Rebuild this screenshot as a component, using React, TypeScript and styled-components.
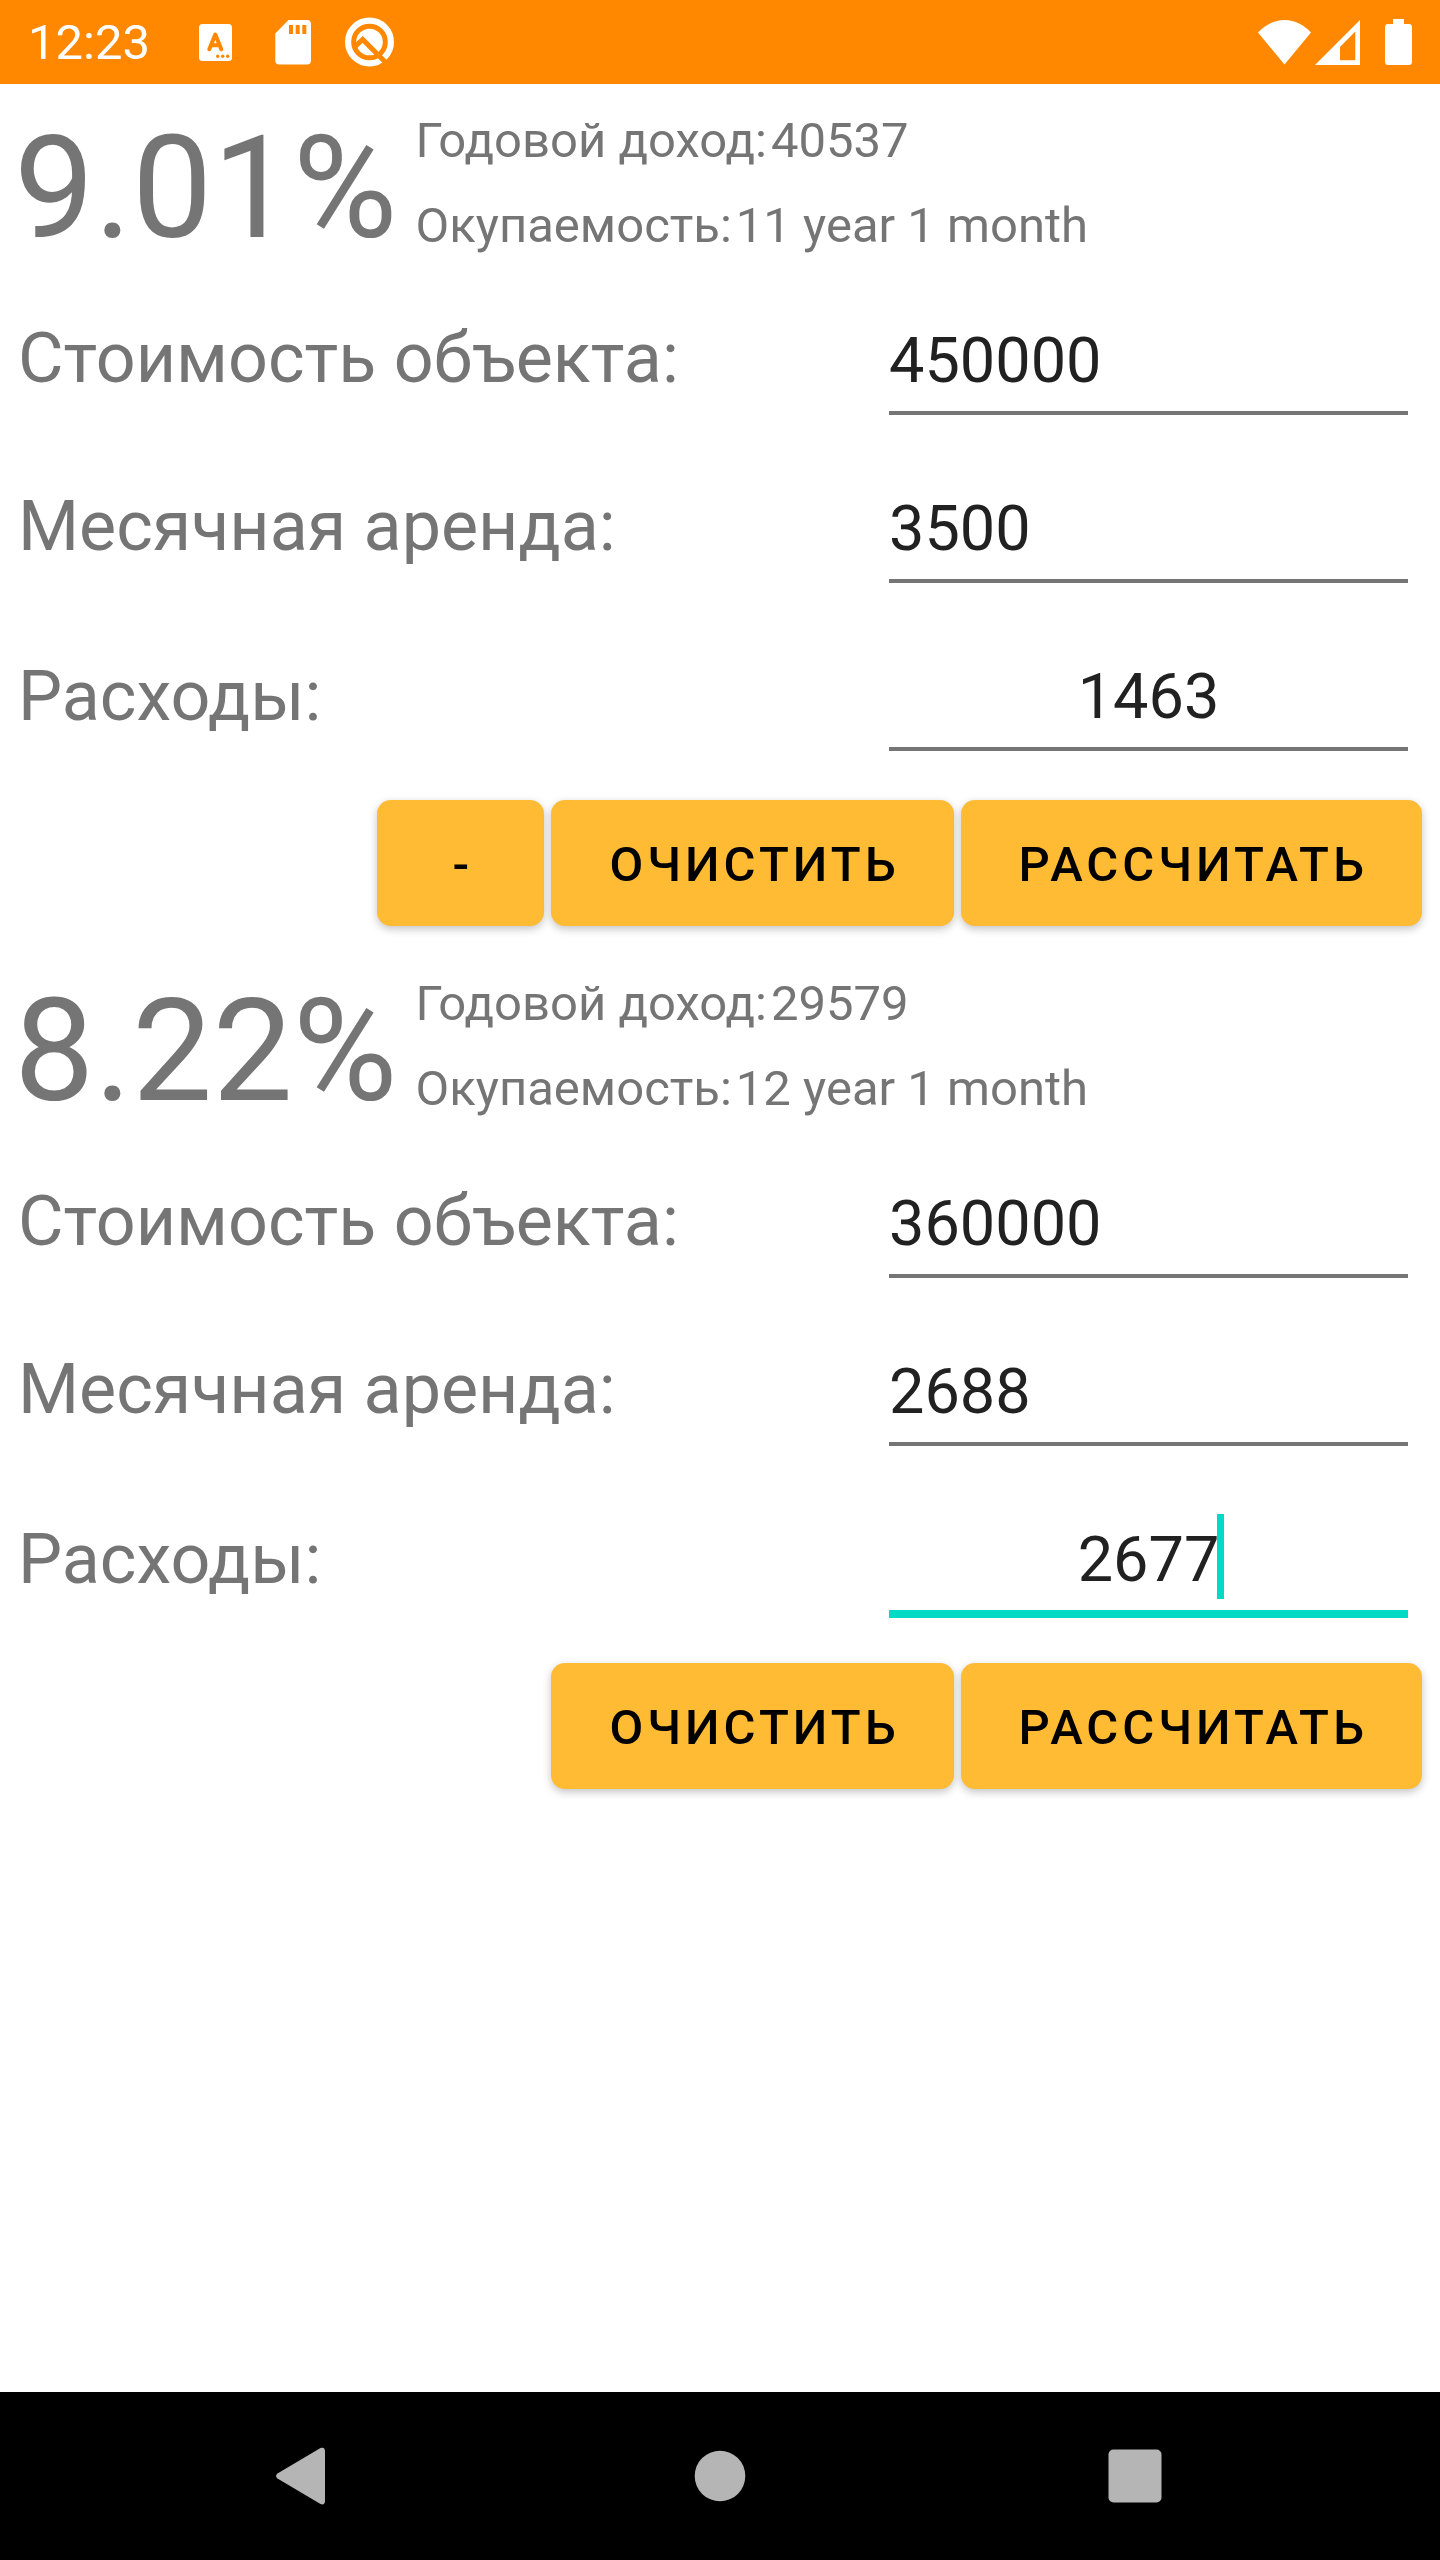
import React, { useId, useState } from "react";
import styled, { createGlobalStyle } from "styled-components";

const GlobalStyle = createGlobalStyle`
  * { box-sizing: border-box; }
  html, body, #root { margin: 0; min-height: 100%; }
  body {
    background: #ffffff;
    font-family: Roboto, "Noto Sans", sans-serif;
    color: #757575;
  }
`;

const Screen = styled.div`
  min-height: 100vh;
  display: flex;
  flex-direction: column;
`;

const StatusBar = styled.header`
  height: 84px;
  padding: 0 28px;
  display: flex;
  align-items: center;
  justify-content: space-between;
  background: #ff8800;
  color: #ffffff;
`;

const StatusGroup = styled.div<{ $gap: number }>`
  display: flex;
  align-items: center;
  gap: ${(p) => p.$gap}px;
`;

const Clock = styled.time`
  padding-top: 2px;
  font-size: 49px;
  line-height: 56px;
`;

const Icon = styled.svg`
  display: block;
  flex: none;
`;

const Content = styled.main`
  flex: 1;
`;

const Card = styled.form`
  margin: 0;
  padding: 14px 0 21px;
`;

const Summary = styled.div`
  display: flex;
  align-items: flex-start;
  gap: 18px;
  height: 178px;
  padding: 0 14px;
`;

const Percent = styled.output`
  font-size: 143px;
  line-height: 180px;
`;

const Facts = styled.dl`
  margin: 0;
`;

const Fact = styled.div`
  display: flex;
  gap: 4px;
  font-size: 49px;
  line-height: 85px;
  white-space: nowrap;

  dt, dd { margin: 0; }
`;

const Row = styled.div<{ $align: "baseline" | "center" }>`
  display: grid;
  grid-template-columns: 857fr 547fr;
  align-items: ${(p) => p.$align};
  padding: 29px 18px;
`;

const Label = styled.label`
  font-size: 70px;
  line-height: 84px;
`;

const Field = styled.div<{ $active: boolean }>`
  position: relative;
  margin: 0 14px;
  font-size: 63px;

  &::after {
    content: "";
    position: absolute;
    left: 0;
    right: 0;
    bottom: ${(p) => (p.$active ? -4 : 0)}px;
    height: ${(p) => (p.$active ? 8 : 4)}px;
    background: ${(p) => (p.$active ? "#03dac5" : "#757575")};
  }
`;

const Input = styled.input<{ $centered: boolean }>`
  display: block;
  width: 100%;
  height: 110px;
  padding: 0;
  border: 0;
  outline: 0;
  background: transparent;
  color: #212121;
  caret-color: transparent;
  font: inherit;
  text-align: ${(p) => (p.$centered ? "center" : "left")};
`;

const Caret = styled.span<{ $chars: number }>`
  position: absolute;
  top: 10px;
  left: calc(50% + ${(p) => p.$chars / 2}ch - 2px);
  width: 7px;
  height: 85px;
  background: #03dac5;
`;

const Actions = styled.div`
  display: flex;
  justify-content: flex-end;
  gap: 7px;
  padding: 20px 18px 0;
`;

const Button = styled.button`
  min-width: 167px;
  height: 126px;
  padding: 4px 54px 0 58px;
  border: 0;
  border-radius: 14px;
  background: #ffbb33;
  color: #000000;
  font: 500 49px/56px Roboto, "Noto Sans", sans-serif;
  letter-spacing: 4px;
  text-transform: uppercase;
  box-shadow: 0 3px 8px rgba(0, 0, 0, 0.24);
`;

const NavBar = styled.nav`
  height: 168px;
  padding: 0 92px;
  display: flex;
  background: #000000;
`;

const NavButton = styled.button`
  flex: 1;
  display: grid;
  place-items: center;
  padding: 0;
  border: 0;
  background: transparent;
  color: #b5b5b5;
`;

type FieldProps = { label: string; initial: string; centered?: boolean; active?: boolean };

function FieldRow({ label, initial, centered = false, active = false }: FieldProps) {
  const id = useId();
  const [value, setValue] = useState(initial);
  return (
    <Row $align={centered ? "center" : "baseline"}>
      <Label htmlFor={id}>{label}</Label>
      <Field $active={active}>
        <Input
          id={id}
          inputMode="numeric"
          value={value}
          $centered={centered}
          onChange={(e) => setValue(e.target.value)}
        />
        {active && <Caret $chars={value.length} />}
      </Field>
    </Row>
  );
}

type Estimate = {
  percent: string;
  income: string;
  payback: string;
  price: string;
  rent: string;
  costs: string;
  removable?: boolean;
  editing?: boolean;
};

const estimates: Estimate[] = [
  { percent: "9.01%", income: "40537", payback: "11 year 1 month", price: "450000", rent: "3500", costs: "1463", removable: true },
  { percent: "8.22%", income: "29579", payback: "12 year 1 month", price: "360000", rent: "2688", costs: "2677", editing: true },
];

function EstimateCard({ data }: { data: Estimate }) {
  return (
    <Card onSubmit={(e) => e.preventDefault()}>
      <Summary>
        <Percent>{data.percent}</Percent>
        <Facts>
          <Fact><dt>Годовой доход:</dt><dd>{data.income}</dd></Fact>
          <Fact><dt>Окупаемость:</dt><dd>{data.payback}</dd></Fact>
        </Facts>
      </Summary>
      <FieldRow label="Стоимость объекта:" initial={data.price} />
      <FieldRow label="Месячная аренда:" initial={data.rent} />
      <FieldRow label="Расходы:" initial={data.costs} centered active={data.editing} />
      <Actions>
        {data.removable && <Button type="button">-</Button>}
        <Button type="button">Очистить</Button>
        <Button type="submit">Рассчитать</Button>
      </Actions>
    </Card>
  );
}

function KeyboardIcon() {
  return (
    <Icon width="52" height="52" viewBox="0 0 52 52" aria-hidden="true">
      <rect x="9" y="8" width="33" height="37" rx="3.5" fill="#fff" />
      <path d="M19.3 33.3 25.3 18.6 31.3 33.3M21.7 29.2H29" fill="none" stroke="#ff8800" strokeWidth="4" strokeLinecap="round" strokeLinejoin="round" />
      <g fill="#ff8800">
        <circle cx="27.7" cy="40.3" r="1.7" />
        <circle cx="32.7" cy="40.3" r="1.7" />
        <circle cx="37.7" cy="40.3" r="1.7" />
      </g>
    </Icon>
  );
}

function SdCardIcon() {
  return (
    <Icon width="52" height="52" viewBox="0 0 52 52" aria-hidden="true">
      <path d="M21.5 4H40a4 4 0 0 1 4 4v36.500a4 4 0 0 1-4 4H12.300a4 4 0 0 1-4-4V17.500Z" fill="#fff" />
      <path d="M22 9h4v9h-4zM28.700 9h4v9h-4zM35.300 9h4v9h-4z" fill="#ff8800" />
    </Icon>
  );
}

function QIcon() {
  return (
    <Icon width="52" height="52" viewBox="0 0 52 52" aria-hidden="true">
      <circle cx="25.500" cy="26" r="21.400" fill="none" stroke="#fff" strokeWidth="6.200" />
      <circle cx="25.500" cy="26" r="13.300" fill="#fff" />
      <path d="M9.500 32 18.700 23.500 44 48.800" fill="none" stroke="#ff8800" strokeWidth="5" />
    </Icon>
  );
}

export default function App() {
  return (
    <Screen>
      <GlobalStyle />
      <StatusBar>
        <StatusGroup $gap={40}>
          <Clock>12:23</Clock>
          <StatusGroup $gap={25}>
            <KeyboardIcon />
            <SdCardIcon />
            <QIcon />
          </StatusGroup>
        </StatusGroup>
        <StatusGroup $gap={25}>
          <StatusGroup $gap={4}>
            <Icon width="53" height="45" viewBox="0 0 53 45" aria-hidden="true">
              <path d="M0 12.500C7 5 16 0 26.500 0S46 5 53 12.500L26.500 44.500Z" fill="#fff" />
            </Icon>
            <Icon width="45" height="45" viewBox="0 0 45 45" aria-hidden="true">
              <path d="M45 0V45H0ZM40.300 11.500 25 27V40.300H40.300Z" fill="#fff" fillRule="evenodd" />
            </Icon>
          </StatusGroup>
          <Icon width="27" height="46" viewBox="0 0 27 46" aria-hidden="true">
            <path d="M8 0H19V5H24a3 3 0 0 1 3 3V43a3 3 0 0 1-3 3H3a3 3 0 0 1-3-3V8a3 3 0 0 1 3-3H8Z" fill="#fff" />
          </Icon>
        </StatusGroup>
      </StatusBar>
      <Content>
        {estimates.map((data) => (
          <EstimateCard key={data.percent} data={data} />
        ))}
      </Content>
      <NavBar>
        <NavButton type="button" aria-label="Back">
          <Icon width="56" height="58" viewBox="0 0 56 58" aria-hidden="true">
            <path d="M47.500 1C50 0 52 1 52 4V54c0 3-2 4-4.500 3L4.500 31.500c-2-1.500-2-3.500 0-5Z" fill="currentColor" />
          </Icon>
        </NavButton>
        <NavButton type="button" aria-label="Home">
          <Icon width="56" height="56" viewBox="0 0 56 56" aria-hidden="true">
            <circle cx="28" cy="28" r="25.300" fill="currentColor" />
          </Icon>
        </NavButton>
        <NavButton type="button" aria-label="Recent apps">
          <Icon width="62" height="56" viewBox="0 0 62 56" aria-hidden="true">
            <rect x="0.500" y="1.500" width="53" height="53" rx="5" fill="currentColor" />
          </Icon>
        </NavButton>
      </NavBar>
    </Screen>
  );
}
